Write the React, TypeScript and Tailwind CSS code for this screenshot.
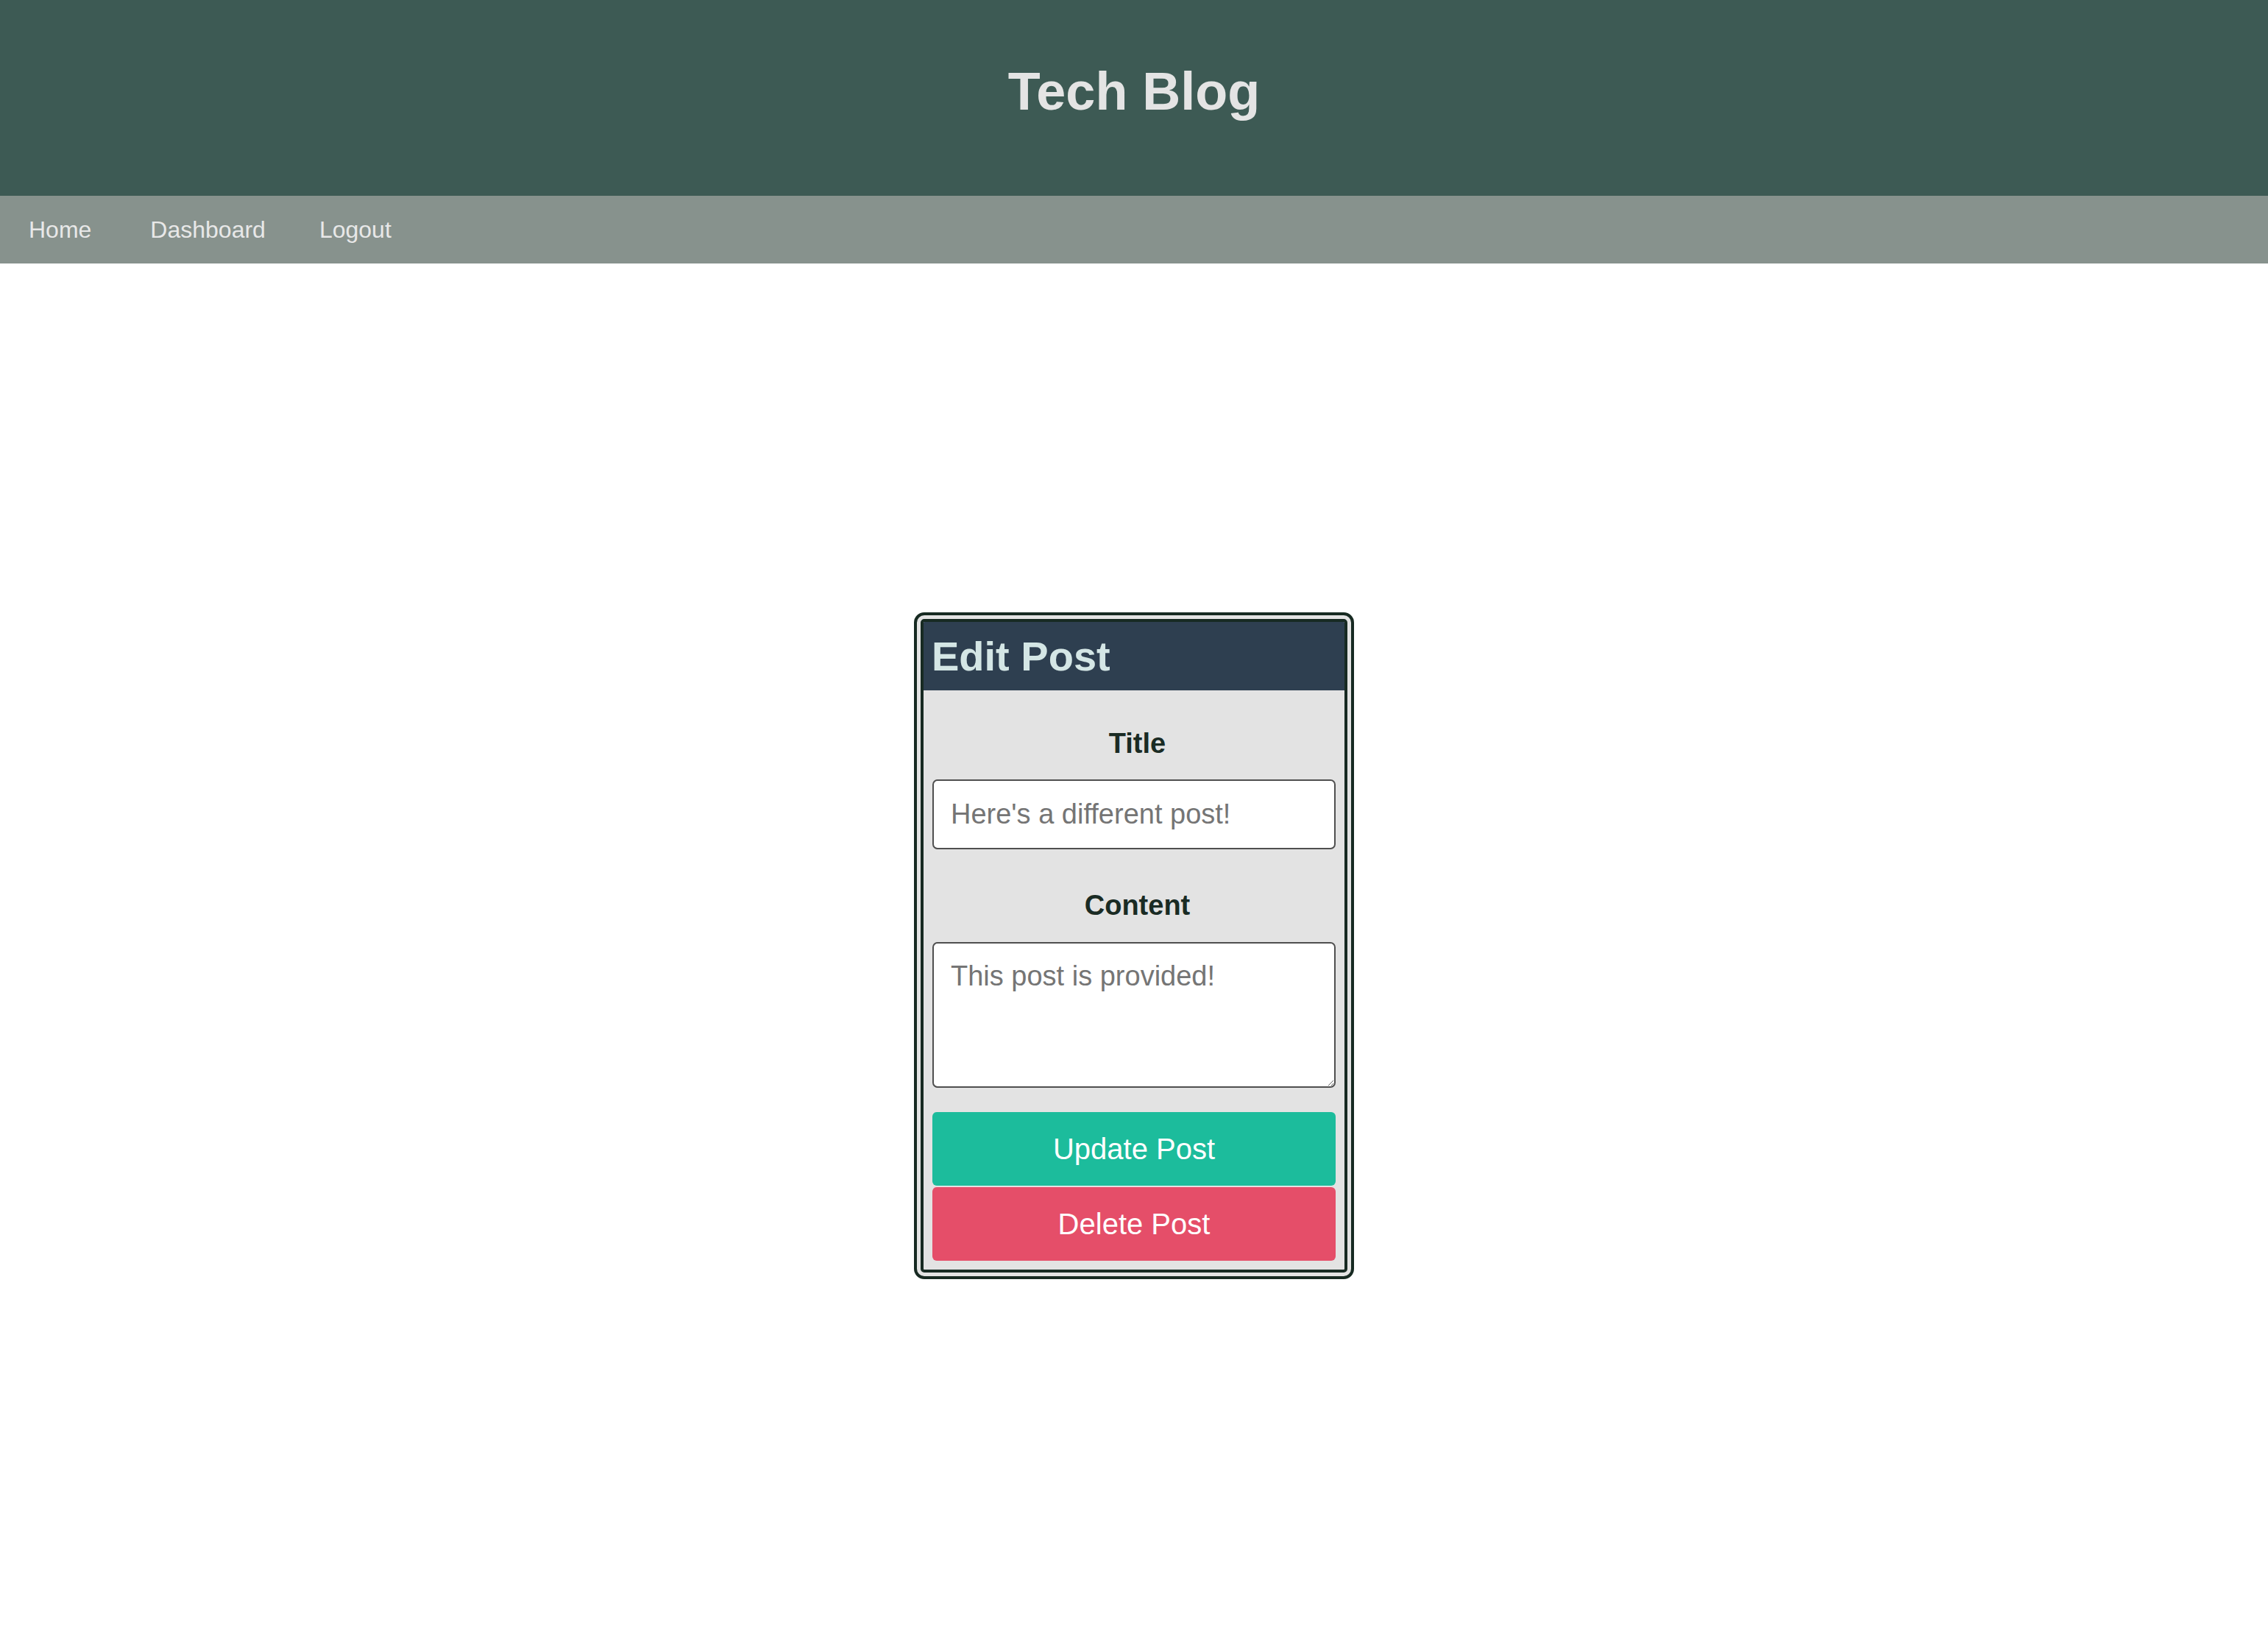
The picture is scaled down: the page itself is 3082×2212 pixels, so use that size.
import React from 'react';

const navLinks = [
  { label: 'Home', className: 'ml-[39px]' },
  { label: 'Dashboard', className: 'ml-[80px]' },
  { label: 'Logout', className: 'ml-[73px]' },
];

const EditPostPage = () => {
  return (
    <div className="min-h-screen w-full flex flex-col bg-white font-['Liberation_Sans',Arial,sans-serif]">
      {/* Site header */}
      <header className="h-[266px] bg-[#3d5a54] flex items-center justify-center pb-[19px]">
        <h1 className="text-[72px] leading-none font-bold text-[#e4e4e4]">Tech Blog</h1>
      </header>

      {/* Nav bar */}
      <nav className="h-[92px] bg-[#87928d] flex items-center">
        {navLinks.map((link) => (
          <a key={link.label} href="#" className={`${link.className} text-[32px] leading-none text-[#e8e8e8]`}>
            {link.label}
          </a>
        ))}
      </nav>

      {/* Main area: card centred in remaining space */}
      <main className="flex-1 flex items-center justify-center">
        <div className="w-[598px] border-[13px] border-double border-[#172a22] rounded-[14px] bg-[#e3e3e3] overflow-hidden">
          <div className="h-[93px] bg-[#2e3f50] flex items-center pl-[11px]">
            <h2 className="text-[56px] leading-none font-bold text-[#d4e6e5]">Edit Post</h2>
          </div>

          <form className="flex flex-col px-[12px] pb-[12px]">
            <label className="mt-[50px] mb-[27px] pl-[9px] text-center text-[38px] leading-[44px] font-bold text-[#1a2b24]">
              Title
            </label>
            <input
              type="text"
              placeholder="Here's a different post!"
              className="h-[95px] w-full rounded-[7px] border-2 border-[#4f4f4f] bg-white pl-[23px] pr-[22px] text-[38px] text-[#333] placeholder:text-[#757575] outline-none"
            />

            <label className="mt-[54px] mb-[28px] pl-[9px] text-center text-[38px] leading-[44px] font-bold text-[#1a2b24]">
              Content
            </label>
            <textarea
              placeholder="This post is provided!"
              className="h-[198px] w-full rounded-[7px] border-2 border-[#4f4f4f] bg-white pl-[23px] pr-[22px] pt-[22px] text-[38px] leading-[44px] text-[#333] placeholder:text-[#757575] outline-none"
            />

            <button
              type="button"
              className="mt-[33px] h-[100px] w-full rounded-md bg-[#1cbc9c] text-[40px] text-white"
            >
              Update Post
            </button>
            <button
              type="button"
              className="mt-[2px] h-[100px] w-full rounded-md bg-[#e54e69] text-[40px] text-white"
            >
              Delete Post
            </button>
          </form>
        </div>
      </main>
    </div>
  );
};

export default EditPostPage;
